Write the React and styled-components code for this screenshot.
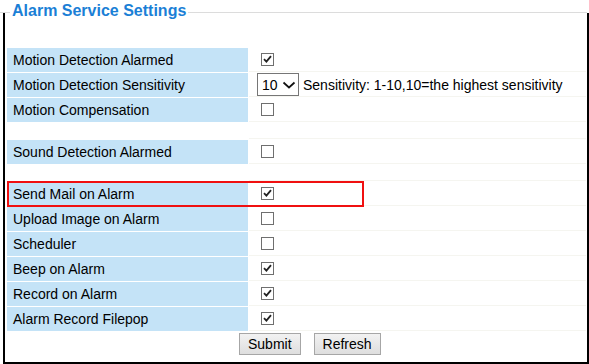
import React from "react";
import styled, { createGlobalStyle } from "styled-components";

const GlobalStyle = createGlobalStyle`
  html, body {
    margin: 0;
    padding: 0;
    background: #ffffff;
  }

  body {
    font-family: "Liberation Sans", Arial, sans-serif;
    color: #000000;
  }
`;

const Page = styled.div`
  position: relative;
  width: 589px;
  height: 364px;
  overflow: hidden;
`;

const Frame = styled.div`
  margin-left: 3px;
  margin-top: 13px;
  width: 582px;
  height: 349px;
  border-left: 2px solid #000;
  border-right: 2px solid #000;
  border-bottom: 2px solid #000;
  display: flex;
  flex-direction: column;
`;

const LegendBar = styled.div`
  position: absolute;
  left: 0;
  top: 0;
  width: 587px;
  height: 24px;
  display: flex;
  pointer-events: none;

  &::before,
  &::after {
    content: "";
    height: 1px;
    background: #dcdcdc;
    margin-top: 12px;
  }

  &::before {
    width: 10px;
  }

  &::after {
    flex: 1;
  }
`;

const LegendText = styled.span`
  padding: 0 2px;
  color: #1b7fd6;
  font-weight: bold;
  font-size: 16px;
  line-height: 24px;
  margin-top: -1px;
`;

const TopSpacer = styled.div`
  height: 35px;
  flex-shrink: 0;
`;

const Table = styled.div`
  display: flex;
  flex-direction: column;
  gap: 1px;
  padding: 0 1px 0 2px;
`;

const Row = styled.div`
  display: grid;
  grid-template-columns: 241px 1fr;
  column-gap: 1px;
  height: ${(p) => (p.$blank ? "16px" : "24px")};
`;

const Label = styled.div`
  background: ${(p) => (p.$blank ? "transparent" : "#c4e3f7")};
  font-size: 14px;
  line-height: 24px;
  padding-left: 6px;
  white-space: nowrap;
`;

const Value = styled.div`
  display: flex;
  align-items: center;
  padding-left: ${(p) => (p.$select ? "8px" : "12px")};
  border-bottom: 1px solid #f5f5f0;
  font-size: 14px;
  white-space: nowrap;
`;

const Box = styled.span`
  display: inline-flex;
  align-items: center;
  justify-content: center;
  width: 13px;
  height: 13px;
  box-sizing: border-box;
  border: 1px solid #6f6f6f;
  background: #fff;
  margin-top: -1px;
`;

const SelectBox = styled.span`
  display: inline-flex;
  align-items: center;
  box-sizing: border-box;
  width: 42px;
  height: 23px;
  border: 1px solid #767676;
  padding-left: 4px;
  font-size: 14px;
  gap: 4px;
  margin-right: 4px;
`;

const Hint = styled.span`
  font-size: 14px;
`;

const Buttons = styled.div`
  display: flex;
  gap: 13px;
  padding-left: 234px;
  margin-top: 2px;
`;

const Button = styled.button`
  height: 22px;
  box-sizing: border-box;
  padding: 0 8px;
  border: 1px solid #a6a6a6;
  border-radius: 0;
  background: linear-gradient(#f2f2f2, #dedede);
  font-family: "Liberation Sans", Arial, sans-serif;
  font-size: 14px;
  color: #000;
  line-height: 20px;
`;

const Highlight = styled.div`
  position: absolute;
  left: 7px;
  top: 181px;
  width: 357px;
  height: 26px;
  box-sizing: border-box;
  border: 2px solid #f01010;
  pointer-events: none;
`;

const Check = ({ on }) => (
  <Box>
    {on && (
      <svg width="9" height="8" viewBox="0 0 9 8">
        <path
          d="M1 4.2 L3.4 6.6 L8 1.2"
          fill="none"
          stroke="#222"
          strokeWidth="1.8"
        />
      </svg>
    )}
  </Box>
);

const rows = [
  { label: "Motion Detection Alarmed", on: true },
  { label: "Motion Detection Sensitivity", select: true },
  { label: "Motion Compensation", on: false },
  { blank: true },
  { label: "Sound Detection Alarmed", on: false },
  { blank: true },
  { label: "Send Mail on Alarm", on: true },
  { label: "Upload Image on Alarm", on: false },
  { label: "Scheduler", on: false },
  { label: "Beep on Alarm", on: true },
  { label: "Record on Alarm", on: true },
  { label: "Alarm Record Filepop", on: true },
];

const App = () => {
  return (
    <Page>
      <GlobalStyle />
      <LegendBar>
        <LegendText>Alarm Service Settings</LegendText>
      </LegendBar>
      <Frame>
        <TopSpacer />
        <Table>
          {rows.map((row, index) => (
            <Row key={index} $blank={row.blank}>
              <Label $blank={row.blank}>{row.label}</Label>
              <Value $select={row.select}>
                {row.select ? (
                  <>
                    <SelectBox>
                      10
                      <svg width="14" height="10" viewBox="0 0 14 10">
                        <path
                          d="M1.5 2.5 L7 7.5 L12.5 2.5"
                          fill="none"
                          stroke="#111"
                          strokeWidth="1.7"
                        />
                      </svg>
                    </SelectBox>
                    <Hint>Sensitivity: 1-10,10=the highest sensitivity</Hint>
                  </>
                ) : row.blank ? null : (
                  <Check on={row.on} />
                )}
              </Value>
            </Row>
          ))}
        </Table>
        <Buttons>
          <Button>Submit</Button>
          <Button>Refresh</Button>
        </Buttons>
      </Frame>
      <Highlight />
    </Page>
  );
};

export default App;
